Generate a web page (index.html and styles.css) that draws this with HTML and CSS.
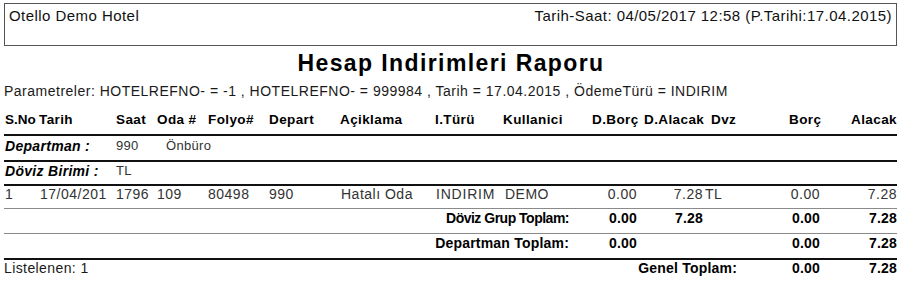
FILE: index.html
```html
<!DOCTYPE html>
<html lang="tr">
<head>
<meta charset="utf-8">
<title>Hesap Indirimleri Raporu</title>
<link rel="stylesheet" href="styles.css">
</head>
<body>
<div class="page">
  <div class="top-box">
    <span class="hotel">Otello Demo Hotel</span>
    <span class="stamp">Tarih-Saat: 04/05/2017 12:58 (P.Tarihi:17.04.2015)</span>
  </div>
  <h1 class="title">Hesap Indirimleri Raporu</h1>
  <div class="params">Parametreler: HOTELREFNO- = -1 , HOTELREFNO- = 999984 , Tarih = 17.04.2015 , ÖdemeTürü = INDIRIM</div>

  <div class="row head">
    <span class="c-sno">S.No</span>
    <span class="c-tarih">Tarih</span>
    <span>Saat</span>
    <span>Oda #</span>
    <span>Folyo#</span>
    <span>Depart</span>
    <span>Açiklama</span>
    <span class="c-itur">I.Türü</span>
    <span>Kullanici</span>
    <span class="h-dborc">D.Borç</span>
    <span class="h-dalacak">D.Alacak</span>
    <span class="h-dvz">Dvz</span>
    <span class="h-borc">Borç</span>
    <span class="num">Alacak</span>
  </div>

  <div class="row group group-dep">
    <span class="glabel">Departman :</span>
    <span class="gval">990</span>
    <span class="gval gname">Önbüro</span>
  </div>

  <div class="row group group-dvz">
    <span class="glabel">Döviz Birimi :</span>
    <span class="gval">TL</span>
  </div>

  <div class="row data">
    <span class="c-sno">1</span>
    <span class="d-tarih">17/04/201</span>
    <span>1796</span>
    <span>109</span>
    <span>80498</span>
    <span>990</span>
    <span class="d-acik">Hatalı Oda</span>
    <span class="d-itur">INDIRIM</span>
    <span class="d-kul">DEMO</span>
    <span class="num n-dborc">0.00</span>
    <span class="num n-dalacak">7.28</span>
    <span class="d-dvz">TL</span>
    <span class="num n-borc">0.00</span>
    <span class="num">7.28</span>
  </div>

  <div class="row total total-dvz">
    <span class="tlabel tlabel-dvz">Döviz Grup Toplam:</span>
    <span class="num n-dborc">0.00</span>
    <span class="num n-dalacak">7.28</span>
    <span></span>
    <span class="num n-borc">0.00</span>
    <span class="num">7.28</span>
  </div>

  <div class="row total total-dep">
    <span class="tlabel">Departman Toplam:</span>
    <span class="num n-dborc">0.00</span>
    <span></span>
    <span></span>
    <span class="num n-borc">0.00</span>
    <span class="num">7.28</span>
  </div>

  <div class="row total total-gen">
    <span class="count">Listelenen: 1</span>
    <span class="glabel-gen">Genel Toplam:</span>
    <span class="num n-borc">0.00</span>
    <span class="num">7.28</span>
  </div>
</div>
</body>
</html>
```

FILE: styles.css
```css
* { box-sizing: border-box; }

html, body {
  margin: 0;
  padding: 0;
  background: #ffffff;
}

body {
  font-family: "Liberation Sans", Arial, sans-serif;
  color: #111111;
}

.page {
  width: 900px;
  padding: 3px 3px 0 4px;
}

.top-box {
  height: 43px;
  border: 1px solid #555555;
  padding: 3px 4px 0 4px;
  display: flex;
  justify-content: space-between;
  align-items: flex-start;
  font-size: 15px;
  line-height: 17px;
  letter-spacing: 0.45px;
  color: #111111;
}

.title {
  margin: 4px 0 0 0;
  text-align: center;
  font-size: 23px;
  line-height: 27px;
  font-weight: bold;
  letter-spacing: 1.4px;
  color: #000000;
  padding-left: 1px;
}

.params {
  margin-top: 6px;
  font-size: 14px;
  line-height: 16px;
  letter-spacing: 0.5px;
  color: #1a1a1a;
  white-space: nowrap;
}

.row {
  display: grid;
  grid-template-columns: 34px 78px 41px 51px 61px 71px 90px 73px 87px 50px 65px 55px 62px 75px;
  font-size: 14px;
  line-height: 16px;
  white-space: nowrap;
}

.num { text-align: right; }

/* column header */
.head {
  margin-top: 13px;
  padding-bottom: 6px;
  border-bottom: 2px solid #111111;
  font-size: 13.5px;
  font-weight: bold;
  letter-spacing: 0.4px;
  color: #000000;
}
.c-sno { padding-left: 1px; }
.head .c-sno { letter-spacing: 0; }
.c-tarih { padding-left: 1px; }
.c-itur { padding-left: 5px; }
.h-dborc { padding-left: 2px; }
.h-dalacak { padding-left: 4px; }
.h-dvz { padding-left: 6px; }
.h-borc { padding-left: 29px; }

/* group rows */
.group {
  border-bottom: 2px solid #111111;
}
.group-dep { padding: 2px 0 6px 0; }
.group-dvz { padding: 1px 0 5px 0; }
.glabel {
  grid-column: 1 / 3;
  padding-left: 1px;
  font-weight: bold;
  font-style: italic;
  letter-spacing: 0.3px;
  color: #000000;
}
.gval {
  font-size: 13px;
  letter-spacing: 0.3px;
  color: #333333;
}
.gname { padding-left: 9px; }

/* data row */
.data {
  padding: 0 0 6px 0;
  border-bottom: 1px solid #8a8a8a;
  letter-spacing: 0.5px;
  color: #333333;
}
.d-tarih { padding-left: 2px; }
.d-acik { padding-left: 1px; }
.d-itur { padding-left: 6px; letter-spacing: 0.8px; }
.d-kul { padding-left: 2px; }
.n-dborc { padding-right: 3px; }
.n-dalacak { padding-right: 2px; }
.n-borc { padding-right: 2px; }
.d-dvz { padding-left: 0; }

/* totals */
.total {
  font-weight: bold;
  letter-spacing: 0.2px;
  color: #000000;
}
.total-dvz {
  padding: 1px 0 7px 0;
  border-bottom: 1px solid #8a8a8a;
}
.total-dep {
  padding: 1px 0 7px 0;
  border-bottom: 2px solid #111111;
}
.total-gen {
  padding: 0;
}
.tlabel {
  grid-column: 1 / 10;
  text-align: right;
  padding-right: 21px;
}
.tlabel-dvz {
  letter-spacing: -0.5px;
}
.count {
  grid-column: 1 / 9;
  font-weight: normal;
  letter-spacing: 0.4px;
  color: #1a1a1a;
}
.glabel-gen {
  grid-column: 9 / 13;
  text-align: right;
  padding-right: 23px;
}
```
